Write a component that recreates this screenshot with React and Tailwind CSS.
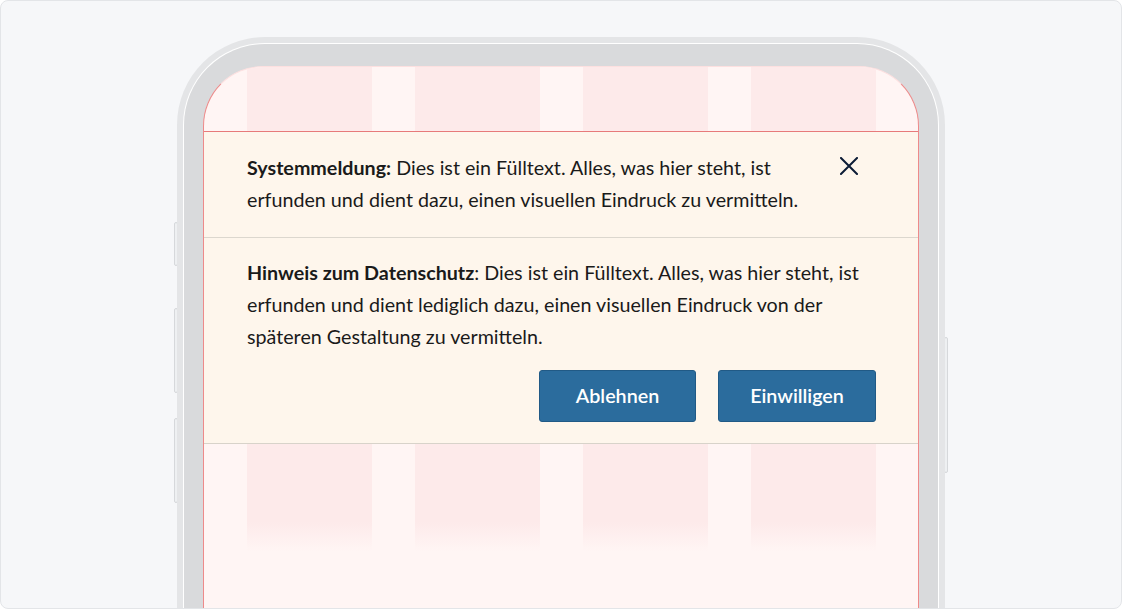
import React from "react";

function SideKey({ className }) {
  return (
    <div
      className={
        "absolute w-[4px] rounded-[2px] bg-[#eef0f2] border border-[#d6d8db] " +
        className
      }
    />
  );
}

function CloseIcon() {
  return (
    <svg width="18" height="18" viewBox="0 0 18 18" fill="none">
      <path
        d="M1 1L17 17M17 1L1 17"
        stroke="#0c1c36"
        strokeWidth="2"
        strokeLinecap="square"
      />
    </svg>
  );
}

export default function App() {
  const font = { fontFamily: "Lato, 'Noto Sans', 'Liberation Sans', sans-serif" };
  return (
    <div
      className="w-[1122px] h-[609px] overflow-hidden rounded-[8px] border border-[#e3e5e8] bg-[#f6f7f9] flex justify-center pt-[36px]"
      style={font}
    >
      <div className="relative w-[768px] h-[640px] shrink-0">
        <SideKey className="left-[-3px] top-[185px] h-[44px]" />
        <SideKey className="left-[-3px] top-[271px] h-[85px]" />
        <SideKey className="left-[-3px] top-[381px] h-[85px]" />
        <SideKey className="right-[-3px] top-[300px] h-[136px]" />

        <div className="relative h-full rounded-t-[88px] bg-[#e4e5e7] px-[6px] pt-[6px]">
          <div className="h-full rounded-t-[82px] border-x border-t border-white bg-[#d9dadc] px-[19px] pt-[22px]">
            <div className="relative h-full overflow-hidden rounded-t-[60px] border-x border-t border-[#ee8a8a] border-t-[#fde0e0] bg-[#fff5f4]">
              {/* grid columns background */}
              <div className="absolute inset-x-0 top-0 flex gap-[43px] pl-[43px]">
                {[0, 1, 2, 3].map((i) => (
                  <div
                    key={i}
                    className="w-[125px] h-[484px] bg-[linear-gradient(to_bottom,#fdeaea_0%,#fdeaea_94%,#fff5f4_100%)]"
                  />
                ))}
              </div>

              {/* banner */}
              <div className="relative mt-[64px] bg-[#fef6ec] text-[19.7px] leading-[32px] text-[#1a1a1a]">
                <div className="h-px bg-[#e77a7a]" />
                <div className="flex items-start pl-[43px] pr-[60px] pt-[20px] pb-[21px]">
                  <p className="flex-1 whitespace-nowrap">
                    <strong className="font-bold">Systemmeldung:</strong> Dies ist ein Fülltext. Alles, was hier steht, ist
                    <br />
                    erfunden und dient dazu, einen visuellen Eindruck zu vermitteln.
                  </p>
                  <button className="mt-[5px] h-[18px] w-[18px] shrink-0" aria-label="Schließen">
                    <CloseIcon />
                  </button>
                </div>
                <div className="h-px bg-[#dcd7ce]" />
                <div className="pl-[43px] pr-[42px] pt-[19px] pb-[21px]">
                  <p className="whitespace-nowrap">
                    <strong className="font-bold">Hinweis zum Datenschutz</strong>: Dies ist ein Fülltext. Alles, was hier steht, ist
                    <br />
                    erfunden und dient lediglich dazu, einen visuellen Eindruck von der
                    <br />
                    späteren Gestaltung zu vermitteln.
                  </p>
                  <div className="mt-[17px] flex justify-end gap-[22px]">
                    <button className="h-[52px] w-[157px] rounded-[3px] border border-[#215a86] bg-[#2b6c9d] text-[19.7px] font-semibold text-white">
                      Ablehnen
                    </button>
                    <button className="h-[52px] w-[158px] rounded-[3px] border border-[#215a86] bg-[#2b6c9d] text-[19.7px] font-semibold text-white">
                      Einwilligen
                    </button>
                  </div>
                </div>
                <div className="h-px bg-[#d8d3ca]" />
              </div>
            </div>
          </div>
        </div>
      </div>
    </div>
  );
}
